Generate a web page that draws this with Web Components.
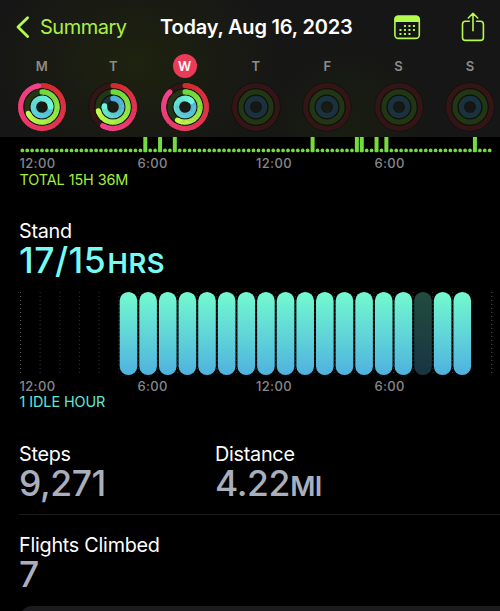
<!DOCTYPE html>
<html lang="en">
<head>
<meta charset="utf-8">
<title>Activity</title>
<style>
  html, body { margin: 0; height: 100%; overflow: hidden; background: #000; }
  body { font-family: Inter, "Liberation Sans", sans-serif; color: #fff; }
  .stats { display: flex; }
  .stats > * { width: 196px; }
</style>
</head>
<body>
<activity-screen>
  <nav-bar slot="header" back="Summary">Today, Aug 16, 2023</nav-bar>
  <week-strip slot="header"></week-strip>

  <exercise-chart></exercise-chart>
  <time-axis></time-axis>
  <chart-note style="--note-color: #a6ee3c; --note-spacing: -0.08px; height: 13px">TOTAL 15H 36M</chart-note>

  <stat-block label="Stand" value="17/15" unit="HRS" style="margin-top: 35px; --value-color: #76fbf4; --value-height: 39px; --value-spacing: 0.45px; --unit-spacing: 0.5px; --unit-gap: 1.5px"></stat-block>
  <stand-chart></stand-chart>
  <time-axis style="height: 21px"></time-axis>
  <chart-note style="--note-color: #62e6dc; --note-spacing: -0.08px; height: 12px">1 IDLE HOUR</chart-note>

  <div class="stats" style="margin-top: 36px">
    <stat-block label="Steps" value="9,271"></stat-block>
    <stat-block label="Distance" value="4.22" unit="MI"></stat-block>
  </div>
  <hr-line></hr-line>
  <stat-block label="Flights Climbed" value="7" style="margin-top: 20px"></stat-block>
  <bottom-card></bottom-card>
</activity-screen>

<script>
  class BaseElement extends HTMLElement {
    shadowRoot = this.attachShadow({ mode: 'open' });

    connectedCallback() {
      this.shadowRoot.innerHTML = `<style>${this.getStyles()}</style>${this.getMarkup()}`;
    }

    getStyles() {
      return ':host { display: block; }';
    }

    getMarkup() {
      return '<slot></slot>';
    }
  }

  class ActivityScreen extends BaseElement {
    getStyles() {
      return `
        :host { display: block; width: 500px; height: 611px; overflow: hidden; background: #000; }
        header {
          height: 137px;
          overflow: hidden;
          background:
            radial-gradient(ellipse 150px 110px at 135px 62px, rgba(36, 44, 8, .55), transparent),
            radial-gradient(ellipse 90px 90px at 345px 125px, rgba(30, 40, 8, .4), transparent),
            #161616;
        }
        main { padding-left: 20px; }
      `;
    }

    getMarkup() {
      return '<header><slot name="header"></slot></header><main><slot></slot></main>';
    }
  }

  class NavBar extends BaseElement {
    getStyles() {
      return `
        :host { display: block; }
        nav { display: flex; align-items: center; height: 54px; box-sizing: border-box; padding-left: 15px; }
        svg { display: block; flex: none; fill: none; stroke: #b4fb4f; }
        .back { width: 145px; display: flex; align-items: center; gap: 10px; color: #a9f244; font-size: 20px; letter-spacing: -0.5px; line-height: 54px; }
        .title { width: 234px; font-size: 20px; font-weight: 600; letter-spacing: -0.2px; line-height: 54px; white-space: nowrap; }
        .share { margin-left: 40px; }
      `;
    }

    getMarkup() {
      const dots = [
        [16.5, 11], [12, 11], [21, 11],
        [7.5, 15], [12, 15], [16.5, 15], [21, 15],
        [7.5, 19], [12, 19], [16.5, 19],
      ];
      return `
        <nav>
          <div class="back">
            <svg width="15" height="24" viewBox="0 0 15 24"><path d="M12.6 2.7 3 12.1l9.6 9.4" stroke-width="2.8" stroke-linecap="round" stroke-linejoin="round"/></svg>
            <span>${this.getAttribute('back')}</span>
          </div>
          <div class="title"><slot></slot></div>
          <svg width="27" height="26" viewBox="0 0 27 26">
            <rect x=".9" y="2.4" width="24.4" height="22" rx="3.4" stroke-width="1.6"/>
            <path d="M.5 8V5.200q0-3.600 3.600-3.600h18q3.600 0 3.600 3.600V8z" fill="#b4fb4f" stroke="none"/>
            ${dots.map(([x, y]) => `<rect x="${x - 2.1}" y="${y - 0.1}" width="2.1" height="2.1" rx=".4" fill="#b4fb4f" stroke="none"/>`).join('')}
          </svg>
          <svg class="share" width="25" height="31" viewBox="0 0 25 31" stroke-width="1.6" stroke-linecap="round" stroke-linejoin="round">
            <path d="M8.300 9.200H4.500Q1.500 9.200 1.500 12.200v13.200q0 3 3 3h14.900q3 0 3-3V12.200q0-3-3-3h-3.800M12 18.700V1.500M7.300 6l4.700-4.700L16.700 6"/>
          </svg>
        </nav>
      `;
    }
  }

  class ActivityRings extends BaseElement {
    getStyles() {
      return ':host { display: block; } svg { display: block; }';
    }

    getMarkup() {
      const values = (this.getAttribute('values') || '0,0,0').split(',').map(Number);
      const rings = [
        { r: 21.4, w: 5.1, from: [210, 44, 42], to: [243, 66, 140], track: '#331516' },
        { r: 15.1, w: 5.1, from: [108, 218, 60], to: [196, 252, 76], track: '#223614' },
        { r: 8.6, w: 5.5, from: [78, 176, 222], to: [112, 247, 216], track: '#1a323e' },
      ];
      const content = rings.map((ring, i) => `
        <circle r="${ring.r}" stroke="#0e0f0c" stroke-width="${ring.w + 1.2}"/>
        <circle r="${ring.r}" stroke="${ring.track}" stroke-width="${ring.w}"/>
        ${values[i] ? this.getArc(ring, values[i]) : ''}
      `).join('');
      return `<svg width="50" height="50" viewBox="-25 -25 50 50" fill="none">${content}</svg>`;
    }

    // the gradient follows the arc, so it is drawn as short overlapping pieces
    getArc({ r, w, from, to }, value) {
      const steps = 60;
      const point = (t) => {
        const a = t * Math.PI * 2;
        return `${(r * Math.sin(a)).toFixed(3)} ${(-r * Math.cos(a)).toFixed(3)}`;
      };
      let out = '';
      for (let i = 0; i < steps; i++) {
        const color = from.map((c, k) => Math.round(c + ((to[k] - c) * i) / (steps - 1)));
        const start = (i / steps) * value;
        const end = Math.min(((i + 1.4) / steps) * value, value);
        const cap = i === 0 || i === steps - 1 ? 'round' : 'butt';
        out += `<path d="M${point(start)}A${r} ${r} 0 0 1 ${point(end)}" stroke="rgb(${color})" stroke-width="${w}" stroke-linecap="${cap}"/>`;
      }
      return out;
    }
  }

  class WeekStrip extends BaseElement {
    getStyles() {
      return `
        :host { display: block; }
        .week { display: grid; grid-template-columns: repeat(7, 71.35px); padding-left: 6.2px; }
        .day { display: flex; flex-direction: column; align-items: center; gap: 3.5px; }
        .name { width: 24px; height: 24px; border-radius: 50%; font-size: 13px; font-weight: 600; line-height: 24px; text-align: center; color: #8c8c8c; }
        .selected { background: #eb3b58; color: #fff; }
      `;
    }

    getMarkup() {
      const days = [
        ['M', '.975,.68,1.25'],
        ['T', '.58,.71,.77'],
        ['W', '.875,.583,1.133'],
        ['T', '0,0,0'],
        ['F', '0,0,0'],
        ['S', '0,0,0'],
        ['S', '0,0,0'],
      ];
      return `<div class="week">${days.map(([name, values], i) => `
        <div class="day">
          <div class="name ${i === 2 ? 'selected' : ''}">${name}</div>
          <activity-rings values="${values}"></activity-rings>
        </div>`).join('')}</div>`;
    }
  }

  class ExerciseChart extends BaseElement {
    getStyles() {
      return ':host { display: block; height: 16px; } svg { display: block; }';
    }

    getMarkup() {
      const active = [25, 28, 31, 59, 68, 69, 72, 74, 92];
      let marks = '';
      for (let i = 0; i < 96; i++) {
        const x = 2.3 + i * 4.92;
        marks += active.includes(i)
          ? `<rect x="${x - 2}" y="-4" width="4" height="19.2" rx="1"/>`
          : `<circle cx="${x}" cy="13.4" r="1.85"/>`;
      }
      return `<svg width="480" height="16" fill="#74dc3e">${marks}</svg>`;
    }
  }

  class TimeAxis extends BaseElement {
    getStyles() {
      return `
        :host { display: block; height: 20px; margin-left: -0.5px; }
        div { display: grid; height: 100%; grid-template-columns: 118px 118.5px 118.5px auto; align-items: center; font-size: 13px; line-height: 20px; font-weight: 500; letter-spacing: 0.35px; color: #87878c; }
      `;
    }

    getMarkup() {
      return '<div><span>12:00</span><span>6:00</span><span>12:00</span><span>6:00</span></div>';
    }
  }

  class ChartNote extends BaseElement {
    getStyles() {
      return `
        :host { display: flex; align-items: center; margin-left: -0.5px; font-size: 14.4px; line-height: 12px; letter-spacing: var(--note-spacing, 0); color: var(--note-color); white-space: nowrap; }
      `;
    }
  }

  class StatBlock extends BaseElement {
    getStyles() {
      return `
        :host { display: block; }
        .label { margin-left: -1px; font-size: 19.8px; line-height: 20px; letter-spacing: -0.25px; white-space: nowrap; }
        .value { margin-left: -1px; font-size: 35.5px; line-height: calc(var(--value-height, 38px) + 1px); height: var(--value-height, 38px); letter-spacing: var(--value-spacing, -0.45px); color: var(--value-color, #aaafbe); font-weight: 500; white-space: nowrap; }
        .unit { font-size: 27.3px; line-height: 0; font-weight: 600; letter-spacing: var(--unit-spacing, -0.8px); margin-left: var(--unit-gap, 0.5px); }
      `;
    }

    getMarkup() {
      const unit = this.getAttribute('unit');
      return `
        <div class="label">${this.getAttribute('label')}</div>
        <div class="value">${this.getAttribute('value')}${unit ? `<span class="unit">${unit}</span>` : ''}</div>
      `;
    }
  }

  class StandChart extends BaseElement {
    getStyles() {
      return ':host { display: block; height: 83px; margin-top: 12px; } svg { display: block; }';
    }

    getMarkup() {
      const pitch = 19.635;
      let lines = '';
      let bars = '';
      for (let i = 0; i <= 24; i++) {
        if (i === 23) continue;
        const color = i === 0 || i === 24 ? '#5a5a5c' : '#343436';
        const x = 0.5 + i * pitch;
        lines += `<path d="M${x} 0V82" stroke="${color}" stroke-dasharray="1 3"/>`;
      }
      for (let i = 5; i <= 22; i++) {
        const x = 1.5 + i * pitch;
        bars += `<rect x="${x}" width="17.6" height="83" rx="8.7" ${i === 20 ? 'opacity=".3"' : ''} fill="url(#stand)"/>`;
      }
      return `
        <svg width="480" height="83">
          <linearGradient id="stand" x2="0" y2="1"><stop stop-color="#73fad0"/><stop offset="1" stop-color="#4fb2df"/></linearGradient>
          ${lines}${bars}
        </svg>
      `;
    }
  }

  class HrLine extends BaseElement {
    getStyles() {
      return ':host { display: block; height: 1px; margin: 12px 0 0 -1px; background: #1e1e20; }';
    }
  }

  class BottomCard extends BaseElement {
    getStyles() {
      return ':host { display: block; height: 60px; margin-top: 13px; margin-right: -20px; border-radius: 12px; background: #1c1c1e; }';
    }
  }

  customElements.define('activity-screen', ActivityScreen);
  customElements.define('nav-bar', NavBar);
  customElements.define('activity-rings', ActivityRings);
  customElements.define('week-strip', WeekStrip);
  customElements.define('exercise-chart', ExerciseChart);
  customElements.define('time-axis', TimeAxis);
  customElements.define('chart-note', ChartNote);
  customElements.define('stat-block', StatBlock);
  customElements.define('stand-chart', StandChart);
  customElements.define('hr-line', HrLine);
  customElements.define('bottom-card', BottomCard);
</script>
</body>
</html>
